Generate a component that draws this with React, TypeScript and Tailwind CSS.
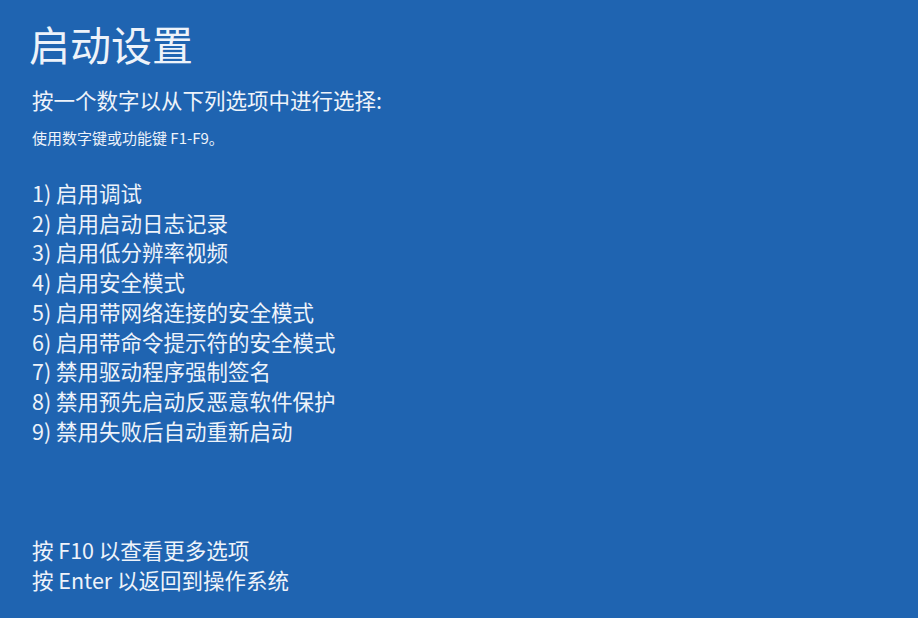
export default function App() {
  const items = [
    "1) 启用调试",
    "2) 启用启动日志记录",
    "3) 启用低分辨率视频",
    "4) 启用安全模式",
    "5) 启用带网络连接的安全模式",
    "6) 启用带命令提示符的安全模式",
    "7) 禁用驱动程序强制签名",
    "8) 禁用预先启动反恶意软件保护",
    "9) 禁用失败后自动重新启动",
  ];
  return (
    <div
      className="w-[918px] h-[618px] bg-[#1f64b1] text-[#eef3fa] flex flex-col pl-[32px] pt-[18px] overflow-hidden"
      style={{ fontFamily: '"Noto Sans CJK SC", "Noto Sans", sans-serif' }}
    >
      <div className="text-[41px] leading-[50px] -ml-[3px]">启动设置</div>
      <div className="mt-[18px] text-[21.5px] leading-[28px]">按一个数字以从下列选项中进行选择:</div>
      <div className="mt-[13px] text-[15px] leading-[22px]">使用数字键或功能键 F1-F9。</div>
      <div className="mt-[29px] flex flex-col">
        {items.map((t) => (
          <div key={t} className="text-[21.5px] leading-[29.7px]">
            {t}
          </div>
        ))}
      </div>
      <div className="mt-[90px] flex flex-col">
        <div className="text-[21.5px] leading-[30px]">按 F10 以查看更多选项</div>
        <div className="text-[21.5px] leading-[30px]">按 Enter 以返回到操作系统</div>
      </div>
    </div>
  );
}
